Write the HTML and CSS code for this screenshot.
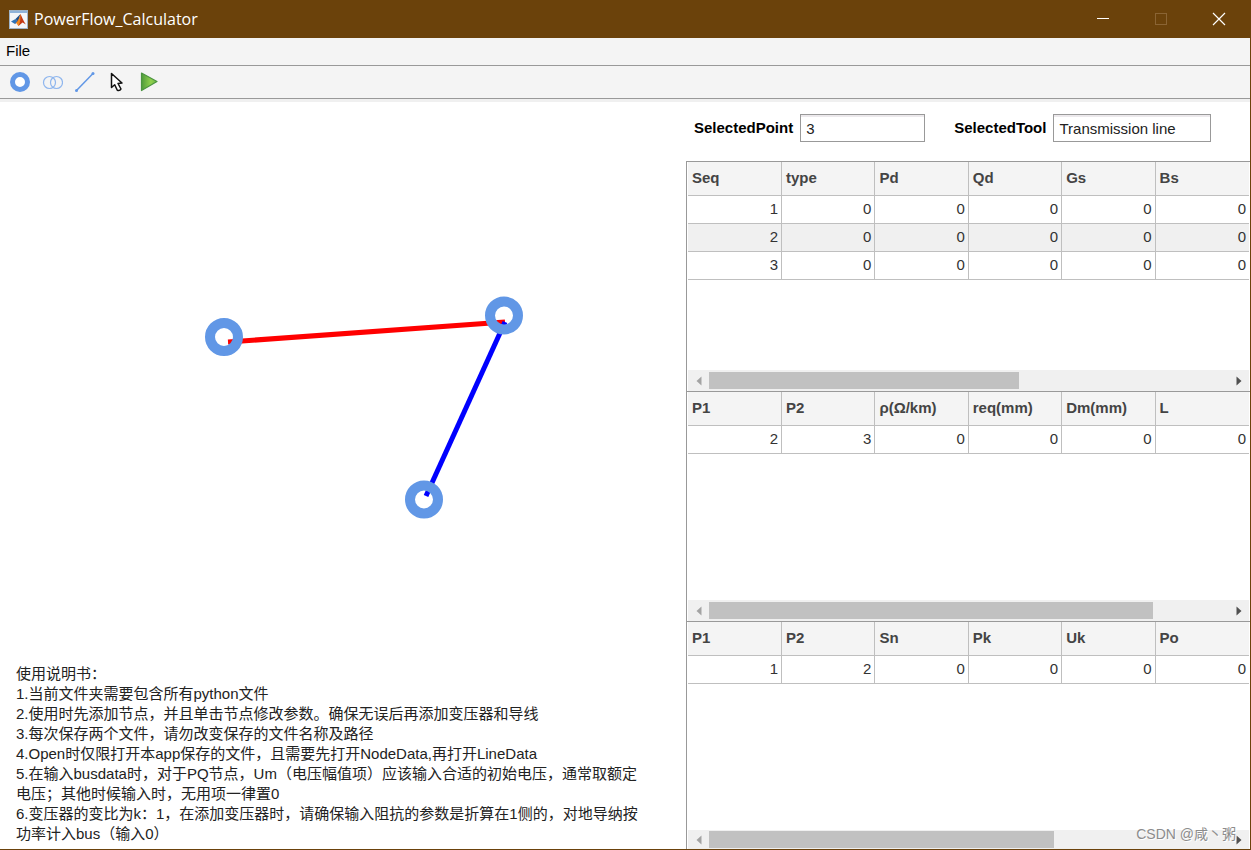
FILE: index.html
```html
<!DOCTYPE html>
<html lang="zh-CN">
<head>
<meta charset="utf-8">
<title>PowerFlow_Calculator</title>
<link rel="stylesheet" href="styles.css">
</head>
<body>
<div class="window">
  <header class="titlebar">
    <svg class="app-icon" width="19" height="19" viewBox="0 0 19 19" aria-hidden="true">
      <rect x="0.5" y="0.5" width="18" height="18" fill="#f4f6f8" stroke="#9fb4c8"/>
      <rect x="1" y="1" width="17" height="2" fill="#8fb3d9"/>
      <path d="M2 11.500L6.500 9L9 11.500L6 14Z" fill="#2f73b5"/>
      <path d="M6.500 9L11.500 4L9 11.500Z" fill="#1e4f86"/>
      <path d="M11.500 4C12.500 6 14.500 11 17 14.500L13.500 12.500L9.500 16L8 12.500L6 14C9 11 10.500 8 11.500 4Z" fill="#c43a14"/>
      <path d="M11.500 4C11.500 8 11.500 12 9.500 16C8.500 15 8 13.500 7 13C9.500 11 10.500 8 11.500 4Z" fill="#ee8b20"/>
    </svg>
    <h1 class="title">PowerFlow_Calculator</h1>
    <div class="window-controls">
      <button class="window-button" type="button" aria-label="Minimize">
        <svg width="14" height="14" viewBox="0 0 14 14"><path d="M1 6.500H13" stroke="#fff"/></svg>
      </button>
      <button class="window-button" type="button" aria-label="Maximize" disabled>
        <svg width="14" height="14" viewBox="0 0 14 14"><rect x="1.500" y="1.500" width="11" height="11" fill="none" stroke="#8a6434"/></svg>
      </button>
      <button class="window-button" type="button" aria-label="Close">
        <svg width="14" height="14" viewBox="0 0 14 14"><path d="M1 1L13 13M13 1L1 13" stroke="#fff" stroke-width="1.200"/></svg>
      </button>
    </div>
  </header>

  <nav class="menubar">
    <button class="menu-item" type="button">File</button>
  </nav>

  <div class="toolbar">
    <button class="tool" type="button" aria-label="Node">
      <svg width="22" height="22" viewBox="0 0 22 22"><circle cx="11" cy="11" r="7.500" fill="#fff" stroke="#6197e6" stroke-width="5"/></svg>
    </button>
    <button class="tool" type="button" aria-label="Transformer">
      <svg width="22" height="22" viewBox="0 0 22 22"><g fill="none" stroke="#8fb6ee" stroke-width="1.200"><circle cx="8.500" cy="11.500" r="6"/><circle cx="15.500" cy="11.500" r="6"/></g></svg>
    </button>
    <button class="tool" type="button" aria-label="Transmission line">
      <svg width="22" height="22" viewBox="0 0 22 22"><path d="M3 20L20 2.500" stroke="#6197e6" stroke-width="1.500"/><circle cx="3.500" cy="19.500" r="1.500" fill="#6197e6"/><circle cx="20" cy="2.500" r="1.500" fill="#6197e6"/></svg>
    </button>
    <button class="tool" type="button" aria-label="Select">
      <svg width="22" height="22" viewBox="0 0 22 22"><path d="M6.500 2.500V16.500L9.700 13.800L12.300 19.300Q15 20 16 18L13 12.500L17 12Z" fill="#fff" stroke="#111" stroke-width="1.500" stroke-linejoin="round"/></svg>
    </button>
    <button class="tool" type="button" aria-label="Run">
      <svg width="22" height="22" viewBox="0 0 22 22">
        <defs><linearGradient id="run" x1="0" y1="0" x2="1" y2="0"><stop offset="0" stop-color="#4f9a3c"/><stop offset="0.600" stop-color="#8fd04c"/><stop offset="1" stop-color="#6db545"/></linearGradient></defs>
        <path d="M4.500 2L20 10.500L4.500 19.500Z" fill="url(#run)" stroke="#4b9440" stroke-width="1.200" stroke-linejoin="round"/>
      </svg>
    </button>
  </div>

  <main class="workspace">
    <section class="diagram-pane">
      <svg class="diagram" role="img" aria-label="Network diagram">
        <line x1="228" y1="240" x2="505" y2="220" stroke="#f00" stroke-width="5"/>
        <line x1="426" y1="394" x2="505" y2="220" stroke="#00f" stroke-width="5"/>
        <g fill="none" stroke="#6197e6" stroke-width="10">
          <circle cx="224" cy="235" r="14"/>
          <circle cx="504" cy="213.500" r="14"/>
          <circle cx="424" cy="397.500" r="14"/>
        </g>
      </svg>
      <div class="manual">
        <p>使用说明书：</p>
        <p>1.当前文件夹需要包含所有python文件</p>
        <p>2.使用时先添加节点，并且单击节点修改参数。确保无误后再添加变压器和导线</p>
        <p>3.每次保存两个文件，请勿改变保存的文件名称及路径</p>
        <p>4.Open时仅限打开本app保存的文件，且需要先打开NodeData,再打开LineData</p>
        <p>5.在输入busdata时，对于PQ节点，Um（电压幅值项）应该输入合适的初始电压，通常取额定电压；其他时候输入时，无用项一律置0</p>
        <p>6.变压器的变比为k：1，在添加变压器时，请确保输入阻抗的参数是折算在1侧的，对地导纳按功率计入bus（输入0）</p>
      </div>
    </section>

    <section class="data-pane">
      <form class="selection">
        <label class="field-label" for="point">SelectedPoint</label>
        <input class="field field-point" id="point" type="text" value="3">
        <label class="field-label" for="tool">SelectedTool</label>
        <input class="field field-tool" id="tool" type="text" value="Transmission line">
      </form>

      <div class="grid-panel">
        <table class="grid">
          <thead><tr><th>Seq</th><th>type</th><th>Pd</th><th>Qd</th><th>Gs</th><th>Bs</th></tr></thead>
          <tbody>
            <tr><td>1</td><td>0</td><td>0</td><td>0</td><td>0</td><td>0</td></tr>
            <tr><td>2</td><td>0</td><td>0</td><td>0</td><td>0</td><td>0</td></tr>
            <tr><td>3</td><td>0</td><td>0</td><td>0</td><td>0</td><td>0</td></tr>
          </tbody>
        </table>
        <div class="scrollbar">
          <button class="scroll-arrow" type="button" aria-label="Scroll left"><svg width="6" height="10" viewBox="0 0 6 10"><path d="M5.500 0.500V9.500L0.500 5Z" fill="#a3a3a3"/></svg></button>
          <div class="scroll-track"><div class="scroll-thumb" style="width:59.700%"></div></div>
          <button class="scroll-arrow" type="button" aria-label="Scroll right"><svg width="6" height="10" viewBox="0 0 6 10"><path d="M0.500 0.500V9.500L5.500 5Z" fill="#505050"/></svg></button>
        </div>
      </div>

      <div class="grid-panel">
        <table class="grid">
          <thead><tr><th>P1</th><th>P2</th><th>ρ(Ω/km)</th><th>req(mm)</th><th>Dm(mm)</th><th>L</th></tr></thead>
          <tbody>
            <tr><td>2</td><td>3</td><td>0</td><td>0</td><td>0</td><td>0</td></tr>
          </tbody>
        </table>
        <div class="scrollbar">
          <button class="scroll-arrow" type="button" aria-label="Scroll left"><svg width="6" height="10" viewBox="0 0 6 10"><path d="M5.500 0.500V9.500L0.500 5Z" fill="#a3a3a3"/></svg></button>
          <div class="scroll-track"><div class="scroll-thumb" style="width:85.500%"></div></div>
          <button class="scroll-arrow" type="button" aria-label="Scroll right"><svg width="6" height="10" viewBox="0 0 6 10"><path d="M0.500 0.500V9.500L5.500 5Z" fill="#505050"/></svg></button>
        </div>
      </div>

      <div class="grid-panel grid-panel-last">
        <table class="grid">
          <thead><tr><th>P1</th><th>P2</th><th>Sn</th><th>Pk</th><th>Uk</th><th>Po</th></tr></thead>
          <tbody>
            <tr><td>1</td><td>2</td><td>0</td><td>0</td><td>0</td><td>0</td></tr>
          </tbody>
        </table>
        <div class="scrollbar">
          <button class="scroll-arrow" type="button" aria-label="Scroll left"><svg width="6" height="10" viewBox="0 0 6 10"><path d="M5.500 0.500V9.500L0.500 5Z" fill="#a3a3a3"/></svg></button>
          <div class="scroll-track"><div class="scroll-thumb" style="width:66.500%"></div></div>
          <button class="scroll-arrow" type="button" aria-label="Scroll right"><svg width="6" height="10" viewBox="0 0 6 10"><path d="M0.500 0.500V9.500L5.500 5Z" fill="#505050"/></svg></button>
        </div>
      </div>
    </section>
  </main>
  <div class="watermark">CSDN @咸丶粥</div>
</div>
</body>
</html>
```

FILE: styles.css
```css
* {
  box-sizing: border-box;
}

body {
  margin: 0;
  font-family: "Liberation Sans", "Noto Sans CJK SC", sans-serif;
  font-size: 15px;
  line-height: 20px;
  color: #000;
}

button {
  padding: 0;
  border: 0;
  background: none;
  font: inherit;
  color: inherit;
}

svg {
  display: block;
}

.window {
  position: relative;
  display: flex;
  flex-direction: column;
  min-height: 100vh;
  border-right: 1px solid #6b420b;
  border-bottom: 1px solid #6b420b;
  background: #fff;
}

.titlebar {
  display: flex;
  align-items: center;
  height: 38px;
  padding: 0 2px 0 9px;
  background: #6b420b;
  color: #fff;
}

.title {
  flex: 1;
  margin: 0 0 0 6px;
  font-family: "Open Sans", "Noto Sans", sans-serif;
  font-size: 16px;
  font-weight: 400;
}

.window-controls {
  display: flex;
}

.window-button {
  display: flex;
  align-items: center;
  justify-content: center;
  width: 58px;
  height: 38px;
}

.menubar {
  display: flex;
  align-items: center;
  height: 28px;
  padding: 0 6px 2px;
  border-bottom: 1px solid #999;
  background: #f4f4f4;
}

.toolbar {
  display: flex;
  align-items: center;
  gap: 10px;
  height: 33px;
  padding-left: 9px;
  border-bottom: 1px solid #999;
  background: #f4f4f4;
}

.workspace {
  flex: 1;
  display: flex;
  border-top: 3px solid #f0f0f0;
}

.diagram-pane {
  flex: 686;
  min-width: 0;
  display: flex;
  flex-direction: column;
}

.diagram {
  flex: 1;
  width: 100%;
  min-height: 440px;
}

.manual {
  padding: 0 40px 5px 16px;
  color: #222;
}

.manual p {
  margin: 0;
}

.data-pane {
  flex: 564;
  min-width: 0;
  display: flex;
  flex-direction: column;
}

.selection {
  display: flex;
  align-items: center;
  gap: 7px;
  padding: 12px 8px 19px;
}

.field-label {
  font-weight: 700;
}

.field {
  height: 28px;
  padding: 0 5px;
  border: 1px solid #999;
  background: #fff;
  box-shadow: inset 0 2px 0 #ece9ec;
  font: inherit;
  color: #222;
}

.field-point {
  width: 125px;
  margin-right: 22px;
}

.field-tool {
  width: 158px;
}

.grid-panel {
  flex: 230 1 0;
  display: flex;
  flex-direction: column;
  justify-content: space-between;
  border-top: 1px solid #999;
  border-left: 1px solid #999;
  padding: 0 1px;
}

.grid-panel-last {
  flex-grow: 228;
}

.grid {
  width: 100%;
  table-layout: fixed;
  border-collapse: separate;
  border-spacing: 0;
  color: #333;
}

.grid th,
.grid td {
  border-right: 1px solid #bfbfbf;
  border-bottom: 1px solid #bfbfbf;
}

.grid th:first-child,
.grid td:first-child {
  width: 94px;
}

.grid th:last-child,
.grid td:last-child {
  border-right: 0;
}

.grid th {
  height: 34px;
  padding: 0 4px 1px;
  background: #f4f4f4;
  color: #444;
  font-weight: 700;
  text-align: left;
}

.grid td {
  height: 28px;
  padding: 0 3px 2px;
  text-align: right;
}

.grid tbody tr:nth-child(even) {
  background: #f0f0f0;
}

.scrollbar {
  display: flex;
  align-items: center;
  height: 21px;
  background: #f0f0f0;
}

.grid-panel-last .scrollbar {
  height: 19px;
}

.scroll-arrow {
  display: flex;
  align-items: center;
  justify-content: center;
  width: 21px;
  height: 17px;
}

.scroll-track {
  flex: 1;
}

.scroll-thumb {
  height: 17px;
  background: #c1c1c1;
}

.watermark {
  position: absolute;
  right: 14px;
  bottom: 5px;
  font-size: 14px;
  color: #8c8c8c;
  text-shadow: 1px 1px 0 #fff;
}
```
